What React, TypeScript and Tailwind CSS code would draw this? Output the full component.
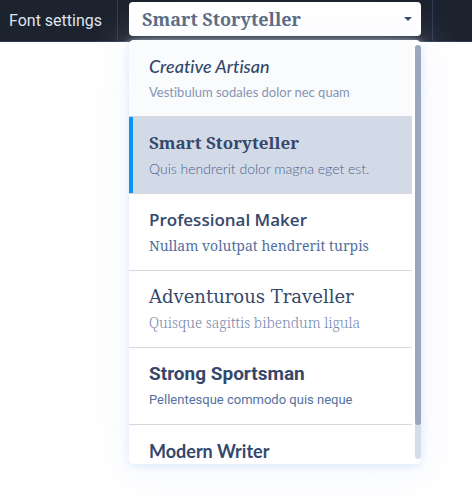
import { useState } from 'react'
import clsx from 'clsx'

interface FontPairing {
  name: string
  sample?: string
  nameClass: string
  sampleClass?: string
}

const pairings: FontPairing[] = [
  {
    name: 'Creative Artisan',
    sample: 'Vestibulum sodales dolor nec quam',
    nameClass: "font-['Lato',cursive] text-[18px] italic font-medium",
    sampleClass: "font-['Lato',sans-serif] text-[13px] text-[#8595b2]"
  },
  {
    name: 'Smart Storyteller',
    sample: 'Quis hendrerit dolor magna eget est.',
    nameClass: "font-['Noto_Serif','DejaVu_Serif_Condensed','DejaVu_Serif',serif] text-[17px] font-bold",
    sampleClass: "font-['Lato',sans-serif] text-[14px] font-light text-[#4c638d]"
  },
  {
    name: 'Professional Maker',
    sample: 'Nullam volutpat hendrerit turpis',
    nameClass: "font-['Open_Sans',sans-serif] text-[17px] font-semibold",
    sampleClass: "font-['Noto_Serif',serif] text-[14px] text-[#5470a0]"
  },
  {
    name: 'Adventurous Traveller',
    sample: 'Quisque sagittis bibendum ligula',
    nameClass: "font-['DejaVu_Serif',serif] text-[18px]",
    sampleClass: "font-['Noto_Serif',serif] text-[14px] font-light text-[#7688aa]"
  },
  {
    name: 'Strong Sportsman',
    sample: 'Pellentesque commodo quis neque',
    nameClass: "font-['Roboto',sans-serif] text-[19px] font-bold",
    sampleClass: "font-['Roboto',sans-serif] text-[13px] text-[#5470a0]"
  },
  {
    name: 'Modern Writer',
    nameClass: "font-['Lato',sans-serif] text-[18px] font-bold"
  }
]

export default function App() {
  const [selected, setSelected] = useState('Smart Storyteller')
  const [open, setOpen] = useState(true)

  const handleSelect = (name: string) => {
    setSelected(name)
    setOpen(false)
  }

  return (
    <div className="min-h-screen bg-white">
      <header className="flex h-[42px] border-b border-[#303a52] bg-[#1c222e]">
        <div className="flex w-[118px] shrink-0 items-center border-r border-[#303a52] pl-[9px]">
          <span id="font-label" className="font-['Roboto',sans-serif] text-[16px] text-[#dfe5f0]">
            Font settings
          </span>
        </div>

        <div className="relative mx-[11px] min-w-0 flex-1 pt-0.5">
          <button
            type="button"
            aria-labelledby="font-label font-value"
            aria-haspopup="listbox"
            aria-expanded={open}
            onClick={() => setOpen(!open)}
            className="flex h-[34px] w-full items-center justify-between rounded bg-white pr-[9px] pl-[13px]"
          >
            <span
              id="font-value"
              className="font-['Noto_Serif','DejaVu_Serif_Condensed','DejaVu_Serif',serif] text-[18px] font-bold text-[#56667f]"
            >
              {selected}
            </span>
            <svg viewBox="0 0 8 4" className="h-1 w-2 fill-[#34486b]" aria-hidden="true">
              <path d="M0 0h8L4 4z" />
            </svg>
          </button>

          {open && (
            <div className="absolute inset-x-0 top-10 flex h-[424px] overflow-hidden rounded-[5px] bg-white shadow-[0_2px_8px_#dceafa,0_6px_44px_#e6edff80]">
              <ul role="listbox" aria-labelledby="font-label" className="min-w-0 flex-1 overflow-hidden">
                {pairings.map((pairing, i) => (
                  <li key={pairing.name} className="border-b border-[#d6d8dc]">
                    <button
                      type="button"
                      role="option"
                      aria-selected={pairing.name === selected}
                      onClick={() => handleSelect(pairing.name)}
                      className={clsx(
                        'block w-full border-l-4 py-3.5 pl-4 text-left [font-variant-ligatures:none]',
                        pairing.name === selected
                          ? 'border-[#0797f2] bg-[#d3dae7]'
                          : i === 0
                            ? 'border-transparent bg-[#fafbfd]'
                            : 'border-transparent bg-white'
                      )}
                    >
                      <span className={clsx('block h-6 leading-6 whitespace-nowrap text-[#34486b]', pairing.nameClass)}>
                        {pairing.name}
                      </span>
                      {pairing.sample && (
                        <span className={clsx('mt-1 block h-5 leading-5 whitespace-nowrap', pairing.sampleClass)}>
                          {pairing.sample}
                        </span>
                      )}
                    </button>
                  </li>
                ))}
              </ul>
              <div className="ml-[3px] w-1.5 py-[5px]">
                <div className="h-full rounded-full bg-[#d3dce9]">
                  <div className="h-11/12 rounded-full bg-[#9ba7bc]" />
                </div>
              </div>
            </div>
          )}
        </div>

        <div className="w-10 shrink-0 border-l border-[#303a52]" />
      </header>
    </div>
  )
}
